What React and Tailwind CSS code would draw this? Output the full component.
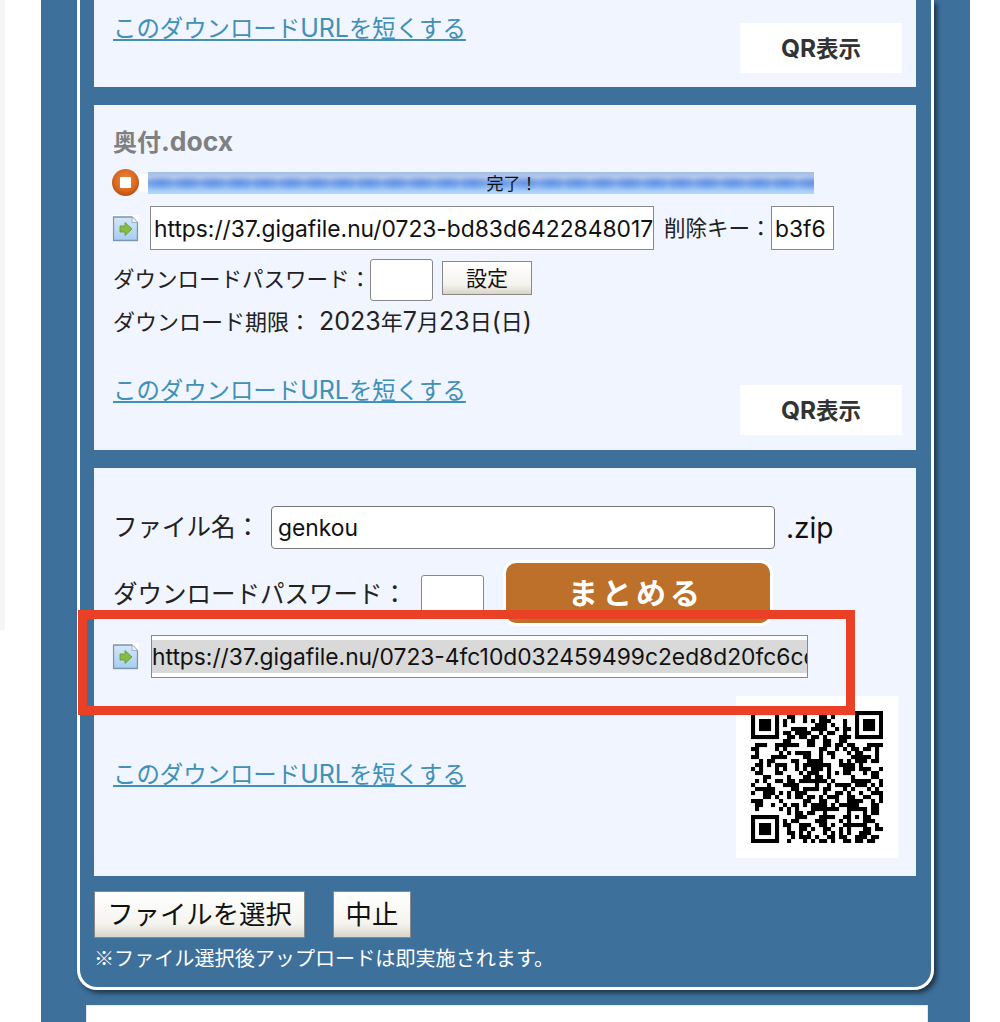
import { useMemo } from 'react'

const barBg =
  'bg-[radial-gradient(ellipse_20px_8px_at_center,rgba(88,138,230,0.7)_0%,rgba(95,143,230,0)_100%),linear-gradient(180deg,#a5bce4_0%,#b5c9ea_25%,#84ace9_50%,#a0c8f6_78%,#b2d9fb_100%)]'

// latin glyphs run larger than the kana in the original
function Lat({ children, className = 'text-[25px]' }) {
  return <span className={`font-['Inter',sans-serif] ${className}`}>{children}</span>
}

function StopIcon() {
  return (
    <svg width="27" height="27" viewBox="0 0 27 27" className="-ml-px shrink-0">
      <defs>
        <radialGradient id="stopFill" cx="50%" cy="42%" r="58%">
          <stop offset="0%" stopColor="#ee8a3e" />
          <stop offset="70%" stopColor="#d9681f" />
          <stop offset="100%" stopColor="#b5500f" />
        </radialGradient>
      </defs>
      <circle cx="13.5" cy="13.5" r="13.5" fill="url(#stopFill)" />
      <rect x="8" y="8" width="11" height="11" rx="1" fill="#fff" />
    </svg>
  )
}

function FileIcon() {
  return (
    <svg width="27" height="27" viewBox="0 0 27 27" className="-ml-px shrink-0">
      <defs>
        <linearGradient id="fileFill" x1="0" y1="0" x2="0" y2="1">
          <stop offset="0%" stopColor="#d6e6f6" />
          <stop offset="100%" stopColor="#a6cdf2" />
        </linearGradient>
      </defs>
      <rect width="27" height="27" fill="#fff" />
      <path d="M1.5 2 L20 2 L25.5 7.5 L25.5 25.5 L1.5 25.5 Z" fill="url(#fileFill)" stroke="#7a94ad" strokeWidth="1.3" />
      <path d="M20 2 L20 7.5 L25.5 7.5" fill="#eef4fb" stroke="#8aa3bb" strokeWidth="0.8" />
      <path d="M8 11 L13 11 L13 7.5 L20 14 L13 20.5 L13 17 L8 17 Z" fill="#86bb45" stroke="#5f9a2d" strokeWidth="0.8" />
    </svg>
  )
}

function ShortenLink() {
  return (
    <a
      href="#"
      className="block h-[30px] text-[23.4px] leading-[28px] whitespace-nowrap text-[#4190b8] underline decoration-2 underline-offset-2"
    >
      このダウンロード<Lat className="text-[25px]">URL</Lat>を短くする
    </a>
  )
}

function QrButton({ className }) {
  return (
    <div className={`flex h-[50px] w-[162px] items-center justify-center bg-white text-[22.5px] font-bold text-[#333] ${className}`}>
      <Lat className="text-[24.5px]">QR</Lat>表示
    </div>
  )
}

function QrCode() {
  const rects = useMemo(() => {
    const size = 33
    const grid = []
    let seed = 20230723
    const next = () => {
      seed = (seed * 1103515245 + 12345) & 0x7fffffff
      return (seed >> 16) & 1
    }
    for (let y = 0; y < size; y++) {
      const row = []
      for (let x = 0; x < size; x++) row.push(next())
      grid.push(row)
    }
    const finder = (ox, oy) => {
      for (let y = -1; y <= 7; y++) {
        for (let x = -1; x <= 7; x++) {
          const gx = ox + x
          const gy = oy + y
          if (gx < 0 || gy < 0 || gx >= size || gy >= size) continue
          const ring = x === 0 || x === 6 || y === 0 || y === 6
          const core = x >= 2 && x <= 4 && y >= 2 && y <= 4
          const inside = x >= 0 && x <= 6 && y >= 0 && y <= 6
          grid[gy][gx] = inside && (ring || core) ? 1 : 0
        }
      }
    }
    finder(0, 0)
    finder(26, 0)
    finder(0, 26)
    for (let y = -2; y <= 2; y++) {
      for (let x = -2; x <= 2; x++) {
        grid[26 + y][26 + x] = Math.max(Math.abs(x), Math.abs(y)) !== 1 ? 1 : 0
      }
    }
    const out = []
    grid.forEach((row, y) =>
      row.forEach((cell, x) => {
        if (cell) out.push(<rect key={`${x}-${y}`} x={x} y={y} width="1.02" height="1.02" />)
      }),
    )
    return out
  }, [])

  return (
    <div className="flex h-[162px] w-[162px] items-center justify-center bg-white">
      <svg width="132" height="132" viewBox="0 0 33 33" fill="#000" className="blur-[0.4px]">
        {rects}
      </svg>
    </div>
  )
}

function TextInput({ value, className }) {
  return (
    <input
      readOnly
      value={value}
      className={`h-[44px] border border-[#888] bg-white pl-[3px] font-['Inter',sans-serif] text-[22.8px] text-[#111] outline-none ${className}`}
    />
  )
}

const card = 'bg-[#f0f5ff] pl-[19px]'
const gelButton =
  'border border-[#888] bg-[linear-gradient(180deg,#ffffff_0%,#f5f4ef_70%,#d9d4ca_100%)] text-[#111] whitespace-nowrap'

function App() {
  return (
    <div className="relative flex h-[1022px] w-[1000px] overflow-hidden bg-white font-['Noto_Sans_CJK_JP',sans-serif] text-[21.5px] text-[#222]">
      <div className="w-[41px] shrink-0">
        <div className="h-[630px] w-[5px] bg-[#f5f5f5]" />
      </div>

      <div className="h-full w-[929px] shrink-0 bg-[#3e709c]">
        <div className="ml-[36px] w-[857px] rounded-b-[20px] border-x-[3px] border-b-[3px] border-white pr-[15px] pb-[15px] pl-[14px] shadow-[3px_3px_5px_rgba(0,0,0,0.55)]">
          <section className={`${card} flex items-start justify-between pt-[13px] pr-[14px] pb-[14px]`}>
            <ShortenLink />
            <QrButton className="mt-[10px]" />
          </section>

          <section className={`${card} mt-[18px] pt-[22px] pr-[14px] pb-[15px]`}>
            <h2 className="h-[30px] text-[24px] leading-[28px] font-bold text-[#808080]">
              奥付<Lat className="text-[26.5px]">.docx</Lat>
            </h2>
            <div className="mt-[12px] flex h-[27px] items-center">
              <StopIcon />
              <div className="h-[18px] w-[9px] bg-white" />
              <div className={`flex h-[22px] w-[666px] items-center justify-center bg-size-[26px_22px,auto] pl-[62px] text-[17px] text-[#111] ${barBg}`}>
                完了！
              </div>
            </div>
            <div className="mt-[10px] flex h-[44px] items-center">
              <FileIcon />
              <TextInput value="https://37.gigafile.nu/0723-bd83d6422848017" className="ml-[11px] w-[504px]" />
              <span className="ml-[10px] w-[107px] pb-[2px] whitespace-nowrap">削除キー：</span>
              <TextInput value="b3f6" className="w-[63px]" />
            </div>
            <div className="mt-[9px] flex h-[42px] items-center">
              <span className="w-[257px] pb-[3px] whitespace-nowrap">ダウンロードパスワード：</span>
              <input readOnly className="h-[42px] w-[63px] rounded-[3px] border border-[#888] bg-white outline-none" />
              <button type="button" className={`mt-[2px] ml-[9px] h-[34px] w-[90px] self-start pb-[2px] text-[21px] ${gelButton}`}>
                設定
              </button>
            </div>
            <p className="mt-[6px] h-[30px] text-[22px] leading-[27px] whitespace-nowrap">
              ダウンロード期限：
              <Lat className="ml-[8px] text-[25px]">2023</Lat>年<Lat>7</Lat>月<Lat>23</Lat>日<Lat>(</Lat>日<Lat>)</Lat>
            </p>
            <div className="mt-[38px] flex items-start justify-between">
              <ShortenLink />
              <QrButton className="mt-[10px]" />
            </div>
          </section>

          <section className={`${card} mt-[18px] pt-[38px] pr-[18px] pb-[18px]`}>
            <div className="flex h-[43px] items-center">
              <span className="w-[158px] pb-[3px] text-[24.5px] whitespace-nowrap">ファイル名：</span>
              <input
                readOnly
                value="genkou"
                className="h-[43px] w-[504px] rounded-[4px] border border-[#777] bg-white px-[6px] font-['Inter',sans-serif] text-[22.8px] text-[#111] outline-none"
              />
              <Lat className="ml-[11px] text-[28px] text-[#111]">.zip</Lat>
            </div>
            <div className="mt-[11px] flex h-[66px] items-center">
              <span className="w-[308px] text-[24.5px] whitespace-nowrap">ダウンロードパスワード：</span>
              <input readOnly className="mt-[15px] h-[43px] w-[63px] self-start rounded-[3px] border border-[#888] bg-white outline-none" />
              <button
                type="button"
                className="ml-[19px] h-[66px] w-[270px] rounded-[13px] border-[3px] border-white bg-[#bd7029] pr-[4px] pb-[3px] text-[30px] font-bold tracking-[4px] text-white"
              >
                まとめる
              </button>
            </div>
            <div className="mt-[9px] flex h-[43px] items-center">
              <FileIcon />
              <div className="ml-[12px] flex h-[43px] w-[657px] items-center overflow-hidden border border-[#888] bg-white">
                <span className="block w-full overflow-hidden bg-[#d9d9d9] font-['Inter',sans-serif] text-[22.8px] leading-[33px] whitespace-nowrap text-[#111]">
                  https://37.gigafile.nu/0723-4fc10d032459499c2ed8d20fc6cd1
                </span>
              </div>
            </div>
            <div className="mt-[18px] flex items-start justify-between">
              <div className="mt-[63px]">
                <ShortenLink />
              </div>
              <QrCode />
            </div>
          </section>

          <div className="mt-[15px] flex gap-[28px]">
            <button type="button" className={`h-[47px] w-[211px] pb-[3px] text-[26.4px] ${gelButton}`}>
              ファイルを選択
            </button>
            <button type="button" className={`h-[47px] w-[78px] pb-[3px] text-[26.4px] ${gelButton}`}>
              中止
            </button>
          </div>
          <p className="mt-[6px] h-[28px] text-[20.1px] leading-[28px] whitespace-nowrap text-white">※ファイル選択後アップロードは即実施されます。</p>
        </div>

        <div className="mt-[15px] ml-[45px] h-[40px] w-[842px] border border-[#e4e8f0] bg-white" />
      </div>

      <div className="absolute top-[610px] left-[78px] h-[105px] w-[777px] border-[9px] border-[#ea4025]" />
    </div>
  )
}

export default App
